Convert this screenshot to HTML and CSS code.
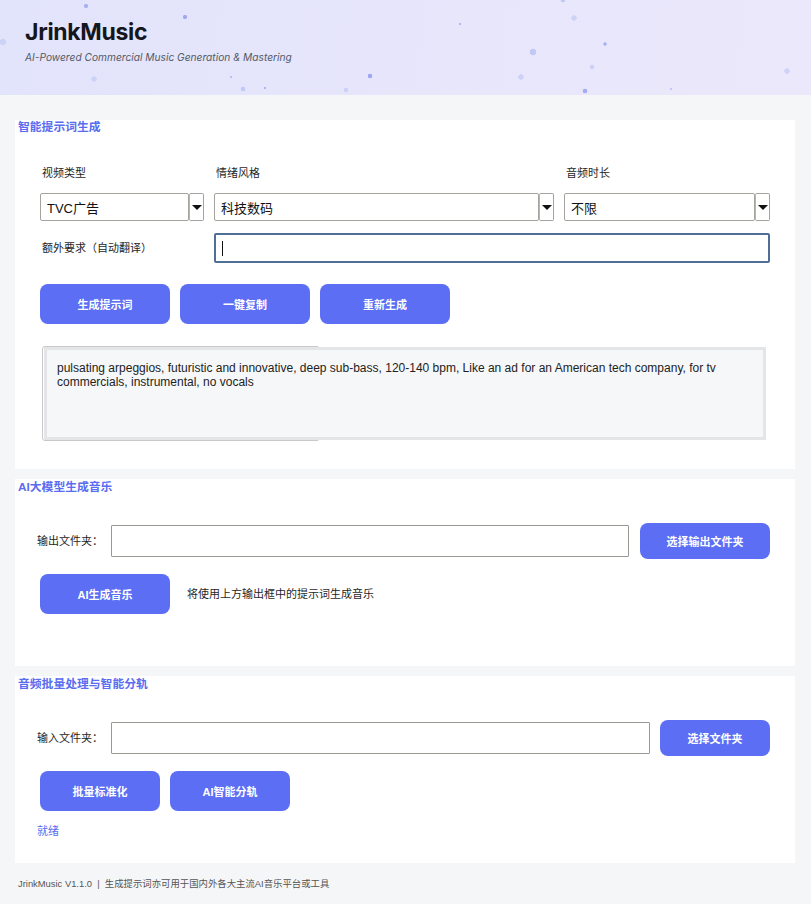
FILE: index.html
```html
<!DOCTYPE html>
<html lang="zh-CN">
  <head>
    <meta charset="UTF-8" />
    <meta name="viewport" content="width=device-width, initial-scale=1.0" />
    <title>JrinkMusic</title>
    <link rel="stylesheet" href="styles.css">
  </head>
  <body>
    <header class="header">
      <h1 class="brand">JrinkMusic</h1>
      <p class="tagline">AI-Powered Commercial Music Generation &amp; Mastering</p>
    </header>

    <main class="content">
      <!-- prompt builder -->
      <section class="panel panel-prompt">
        <h2 class="panel-title">智能提示词生成</h2>

        <div class="fields">
          <label class="field-label">视频类型</label>
          <label class="field-label">情绪风格</label>
          <label class="field-label">音频时长</label>

          <div class="combo">
            <div class="combo-value">TVC广告</div>
            <div class="combo-arrow"></div>
          </div>
          <div class="combo">
            <div class="combo-value">科技数码</div>
            <div class="combo-arrow"></div>
          </div>
          <div class="combo">
            <div class="combo-value">不限</div>
            <div class="combo-arrow"></div>
          </div>

          <label class="field-label extra-label">额外要求（自动翻译）</label>
          <div class="line-edit focused extra-input"><span class="caret"></span></div>
        </div>

        <div class="btn-row">
          <button class="btn btn-wide">生成提示词</button>
          <button class="btn btn-wide">一键复制</button>
          <button class="btn btn-wide">重新生成</button>
        </div>

        <div class="output-wrap">
          <div class="output-frame"></div>
          <div class="prompt-output">pulsating arpeggios, futuristic and innovative, deep sub-bass, 120-140 bpm, Like an ad for an American tech company, for tv commercials, instrumental, no vocals</div>
        </div>
      </section>

      <!-- generation -->
      <section class="panel panel-generate">
        <h2 class="panel-title">AI大模型生成音乐</h2>

        <div class="path-row">
          <span class="path-label">输出文件夹：</span>
          <div class="line-edit path-input"></div>
          <button class="btn btn-pick">选择输出文件夹</button>
        </div>

        <div class="action-row">
          <button class="btn btn-wide">AI生成音乐</button>
          <span class="hint">将使用上方输出框中的提示词生成音乐</span>
        </div>
      </section>

      <!-- batch processing -->
      <section class="panel panel-batch">
        <h2 class="panel-title">音频批量处理与智能分轨</h2>

        <div class="path-row">
          <span class="path-label">输入文件夹：</span>
          <div class="line-edit path-input"></div>
          <button class="btn btn-pick btn-pick-short">选择文件夹</button>
        </div>

        <div class="action-row">
          <button class="btn btn-mid">批量标准化</button>
          <button class="btn btn-mid">AI智能分轨</button>
        </div>

        <p class="status">就绪</p>
      </section>
    </main>

    <footer class="footer">JrinkMusic V1.1.0 &nbsp;|&nbsp; 生成提示词亦可用于国内外各大主流AI音乐平台或工具</footer>
  </body>
</html>
```

FILE: styles.css
```css
:root {
  --accent: #5b6ef4;
  --accent-text: #5a6cf0;
  --page-bg: #f5f6f8;
  --edit-border: #9a9893;
}

* {
  box-sizing: border-box;
}

body {
  margin: 0;
  background-color: var(--page-bg);
  font-family: "Liberation Sans", "Noto Sans CJK SC", sans-serif;
  font-size: 11px;
  color: #1f1f1f;
}

h1,
h2,
p {
  margin: 0;
}

/* ---------- header ---------- */

.header {
  position: relative;
  height: 95px;
  padding: 19px 25px 0;
  background: linear-gradient(100deg, #e2e4fb 0%, #e7e6fb 55%, #ece8fb 100%);
  overflow: hidden;
}

/* scattered particles */
.header::before {
  content: "";
  position: absolute;
  inset: 0;
  pointer-events: none;
  background-image:
    radial-gradient(circle at 86px 6px, #a9b1f2 1.8px, transparent 2.4px),
    radial-gradient(circle at 185px 17px, #9fa8f0 1.8px, transparent 2.4px),
    radial-gradient(circle at 3px 42px, #cdd2f7 3px, transparent 3.6px),
    radial-gradient(circle at 460px 24px, #b4bbf3 1px, transparent 1.5px),
    radial-gradient(circle at 574px 18px, #cdd2f7 2.4px, transparent 3px),
    radial-gradient(circle at 563px 0px, #c2c8f5 2px, transparent 2.6px),
    radial-gradient(circle at 605px 44px, #aab2f2 1.4px, transparent 2px),
    radial-gradient(circle at 533px 52px, #c3c9f6 3px, transparent 3.6px),
    radial-gradient(circle at 592px 67px, #ccd1f7 2px, transparent 2.6px),
    radial-gradient(circle at 787px 71px, #cdd2f7 2.4px, transparent 3px),
    radial-gradient(circle at 521px 77px, #ccd1f7 2.4px, transparent 3px),
    radial-gradient(circle at 370px 76px, #9ea7f0 2px, transparent 2.6px),
    radial-gradient(circle at 94px 79px, #ccd1f7 2.4px, transparent 3px),
    radial-gradient(circle at 231px 77px, #b9c0f4 1px, transparent 1.5px),
    radial-gradient(circle at 243px 89px, #c3c9f6 2px, transparent 2.6px),
    radial-gradient(circle at 265px 88px, #b0b8f3 1px, transparent 1.5px),
    radial-gradient(circle at 346px 90px, #ccd1f7 2px, transparent 2.6px),
    radial-gradient(circle at 585px 91px, #a3acf1 2px, transparent 2.6px),
    radial-gradient(circle at 671px 89px, #c3c9f6 1px, transparent 1.5px);
}

.brand {
  position: relative;
  font-family: Inter, "Liberation Sans", sans-serif;
  font-size: 23px;
  line-height: 26px;
  font-weight: 700;
  letter-spacing: -0.3px;
  color: #16161d;
}

.tagline {
  position: relative;
  margin-top: 5px;
  font-family: Inter, "Liberation Sans", sans-serif;
  font-size: 10.2px;
  line-height: 14px;
  font-style: italic;
  color: #555a66;
}

/* ---------- panels ---------- */

.content {
  display: flex;
  flex-direction: column;
  gap: 10px;
  padding: 25px 16px 0 15px;
}

.panel {
  background-color: #ffffff;
  padding: 0 25px 0 25px;
}

.panel-title {
  margin-left: -22px;
  font-size: 11.8px;
  line-height: 14px;
  font-weight: 700;
  color: var(--accent-text);
}

.panel-prompt {
  padding-bottom: 29px;
}

.panel-generate {
  padding-top: 1px;
  padding-bottom: 52px;
}

.panel-batch {
  padding-top: 1px;
  padding-bottom: 25px;
}

/* ---------- prompt fields ---------- */

.fields {
  display: grid;
  grid-template-columns: 164px 340px 206px;
  column-gap: 10px;
  margin-top: 32px;
}

.field-label {
  padding-left: 2px;
  line-height: 14px;
  margin-bottom: 13px;
}

.combo {
  display: flex;
  height: 28px;
}

.combo-value {
  flex: 1;
  display: flex;
  align-items: center;
  padding-left: 6px;
  background-color: #ffffff;
  border: 1px solid #a5a39d;
  border-radius: 2px;
  font-size: 13px;
  color: #111;
}

.combo-arrow {
  width: 15px;
  display: flex;
  align-items: center;
  justify-content: center;
  border: 1px solid #a5a39d;
  border-left-color: #b8b6b0;
  border-radius: 2px;
  background-color: #ffffff;
}

.combo-arrow::after {
  content: "";
  border-left: 5px solid transparent;
  border-right: 5px solid transparent;
  border-top: 5px solid #111;
  margin-top: 1px;
}

.extra-label {
  align-self: center;
  margin: 12px 0 0;
}

.line-edit {
  background-color: #ffffff;
  border: 1px solid var(--edit-border);
  border-radius: 1px;
}

.line-edit.focused {
  border: 2px solid #4f6f97;
  border-radius: 2px;
}

.extra-input {
  grid-column: 2 / 4;
  height: 30px;
  margin-top: 12px;
  display: flex;
  align-items: center;
  padding-left: 6px;
}

.caret {
  width: 1px;
  height: 15px;
  background-color: #111;
}

/* ---------- buttons ---------- */

.btn {
  height: 40px;
  border: none;
  border-radius: 8px;
  background-color: var(--accent);
  color: #ffffff;
  font-family: "Liberation Sans", "Noto Sans CJK SC", sans-serif;
  font-size: 11px;
  font-weight: 700;
  padding: 0;
}

.btn-wide {
  width: 130px;
}

.btn-mid {
  width: 120px;
}

.btn-row {
  display: flex;
  gap: 10px;
  margin-top: 21px;
}

/* ---------- prompt output ---------- */

.output-wrap {
  position: relative;
  margin: 23px 4px 0 2px;
  height: 93px;
}

.output-frame {
  position: absolute;
  left: 0;
  top: -1px;
  width: 278px;
  height: 95px;
  border: 1px solid #c9c9cc;
  border-radius: 3px;
}

.prompt-output {
  position: relative;
  height: 100%;
  margin-left: 2px;
  padding: 11px 20px 0 10px;
  background-color: #f6f7f9;
  border: 3px solid #e4e5e7;
  font-size: 12px;
  line-height: 14px;
  color: #222;
}

/* ---------- folder rows ---------- */

.path-row {
  display: flex;
  align-items: center;
  margin: 29px 0 0 -3px;
  height: 36px;
}

.path-label {
  width: 74px;
  line-height: 14px;
}

.path-input {
  flex: 1;
  height: 32px;
}

.btn-pick {
  width: 130px;
  height: 36px;
  margin-left: 11px;
}

.btn-pick-short {
  width: 110px;
  margin-left: 10px;
}

.action-row {
  display: flex;
  align-items: center;
  gap: 10px;
  margin-top: 15px;
}

.panel-generate .action-row {
  gap: 17px;
}

.hint {
  line-height: 14px;
}

.status {
  margin: 13px 0 0 -3px;
  line-height: 14px;
  color: var(--accent-text);
}

/* ---------- footer ---------- */

.footer {
  padding: 14px 18px 0;
  font-size: 9.4px;
  line-height: 14px;
  color: #555;
}
```
